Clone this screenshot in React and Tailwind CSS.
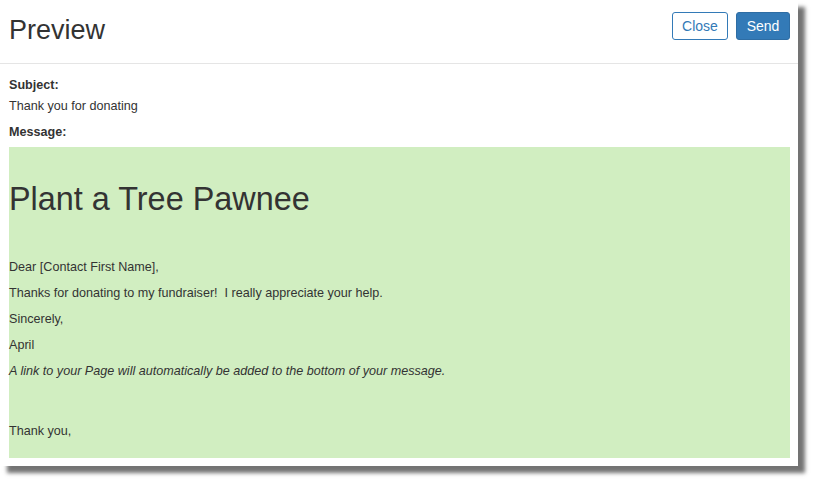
export default function App() {
  return (
    <div className="w-[813px] h-[482px] bg-white overflow-hidden" style={{ fontFamily: '"Liberation Sans", Arial, sans-serif' }}>
      <div className="w-[798px] h-[466px] bg-white shadow-[7px_7px_4px_rgba(0,0,0,0.55)] text-[#333]">
        {/* header */}
        <div className="h-[64px] border-b border-[#e5e5e5] flex items-center justify-between pl-[9px] pr-[8px]">
          <h1 className="text-[27px] leading-none font-normal -mt-[3px]">Preview</h1>
          <div className="flex items-center gap-2 -mt-[11px]">
            <button className="h-[28px] w-[56px] text-[14px] text-[#337ab7] border border-[#337ab7] rounded-[3px] bg-white">Close</button>
            <button className="h-[28px] w-[54px] text-[14px] text-white bg-[#337ab7] border border-[#2e6da4] rounded-[3px]">Send</button>
          </div>
        </div>

        {/* body */}
        <div className="pl-[9px] pr-[8px] pt-[13px] text-[12.6px] leading-[16px]">
          <div className="font-bold">Subject:</div>
          <div className="mt-[5px]">Thank you for donating</div>
          <div className="font-bold mt-[10px]">Message:</div>

          <div className="mt-[7px] h-[311px] bg-[#d1eec1] pt-[34px]">
            <h2 className="text-[32.4px] leading-[36px] font-normal">Plant a Tree Pawnee</h2>
            <p className="mt-[42px]">Dear [Contact First Name],</p>
            <p className="mt-[10px]">Thanks for donating to my fundraiser!&nbsp; I really appreciate your help.</p>
            <p className="mt-[10px]">Sincerely,</p>
            <p className="mt-[10px]">April</p>
            <p className="mt-[10px] italic">A link to your Page will automatically be added to the bottom of your message.</p>
            <p className="mt-[44px]">Thank you,</p>
          </div>
        </div>
      </div>
    </div>
  );
}
